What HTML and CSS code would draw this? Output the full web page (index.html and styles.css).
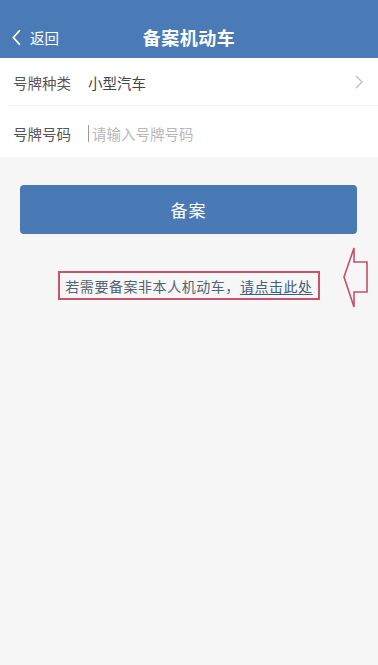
FILE: index.html
```html
<!DOCTYPE html>
<html lang="zh">
<head>
<meta charset="utf-8">
<link rel="stylesheet" href="styles.css">
</head>
<body>
<div class="page">
  <header class="topbar">
    <div class="nav">
      <a class="back">
        <svg class="back-icon" width="9" height="17" viewBox="0 0 9 17"><path d="M7.8 1.2 L1.4 8.5 L7.8 15.8" fill="none" stroke="#ffffff" stroke-width="1.7"/></svg>
        <span>返回</span>
      </a>
      <h1 class="title">备案机动车</h1>
    </div>
  </header>
  <section class="form">
    <div class="row row-first">
      <span class="label">号牌种类</span>
      <span class="value">小型汽车</span>
      <svg class="chev" width="8" height="14" viewBox="0 0 8 14"><path d="M1 1 L7 7 L1 13" fill="none" stroke="#bdbdbd" stroke-width="1.3"/></svg>
    </div>
    <div class="row row-second">
      <span class="label">号牌号码</span>
      <span class="cursor"></span>
      <span class="placeholder">请输入号牌号码</span>
    </div>
  </section>
  <div class="actions">
    <button class="submit">备案</button>
  </div>
  <div class="hint-wrap">
    <p class="hint">若需要备案非本人机动车，<a class="hint-link">请点击此处</a></p>
    <svg class="arrow" width="30" height="64" viewBox="0 0 30 64"><path d="M11 2 L11 16 L24 16 L24 46 L11 46 L11 61 L1 31 Z" fill="none" stroke="#c5506a" stroke-width="1.6" stroke-linejoin="miter"/></svg>
  </div>
</div>
</body>
</html>
```
FILE: styles.css
```css
html, body {
  margin: 0;
  padding: 0;
  background: #f6f6f6;
}
body {
  font-family: "Noto Sans CJK SC", "Noto Sans", sans-serif;
  color: #444;
}
.page {
  width: 378px;
  min-height: 665px;
  background: #f6f6f6;
}
.topbar {
  background: #4b7bb6;
  height: 58px;
  padding-top: 16px;
  box-sizing: border-box;
}
.nav {
  position: relative;
  height: 42px;
  display: flex;
  align-items: center;
  justify-content: center;
}
.back {
  position: absolute;
  left: 12px;
  top: 0;
  height: 42px;
  display: flex;
  align-items: center;
  gap: 9px;
  color: #ffffff;
  font-size: 14.5px;
}
.back-icon {
  display: block;
}
.title {
  margin: 0;
  color: #ffffff;
  font-size: 18px;
  font-weight: bold;
  letter-spacing: 0.5px;
}
.form {
  background: #ffffff;
}
.row {
  display: flex;
  align-items: center;
  padding: 0 14px 0 13px;
  font-size: 14.5px;
}
.row-first {
  height: 46px;
  border-bottom: 1px solid #efefef;
  margin-left: 8px;
  padding-left: 5px;
  padding-top: 1px;
}
.row-second {
  height: 51px;
  padding-top: 4px;
  box-sizing: border-box;
}
.label {
  color: #555555;
  width: 75px;
}
.value {
  color: #444444;
  flex: 1;
}
.chev {
  display: block;
  margin-right: 1px;
}
.cursor {
  width: 1px;
  height: 17px;
  background: #9a9a9a;
  margin-right: 3px;
}
.placeholder {
  color: #b8b8b8;
}
.actions {
  padding: 28px 21px 0 20px;
}
.submit {
  display: block;
  width: 100%;
  height: 49px;
  border: none;
  border-radius: 4px;
  background: #4a7ab5;
  color: #ffffff;
  font-family: "Noto Sans CJK SC", "Noto Sans", sans-serif;
  font-size: 17px;
  letter-spacing: 1px;
  padding: 0;
}
.hint-wrap {
  position: relative;
  display: flex;
  justify-content: center;
  padding-top: 37px;
}
.hint {
  margin: 0;
  height: 29px;
  box-sizing: border-box;
  border: 2px solid #c8546c;
  padding: 0 5px;
  display: flex;
  align-items: center;
  font-size: 14px;
  letter-spacing: 0.55px;
  color: #52646f;
}
.hint-link {
  color: #3f5d7c;
  text-decoration: underline;
  text-underline-offset: 2px;
}
.arrow {
  position: absolute;
  left: 343px;
  top: 12px;
}
```
